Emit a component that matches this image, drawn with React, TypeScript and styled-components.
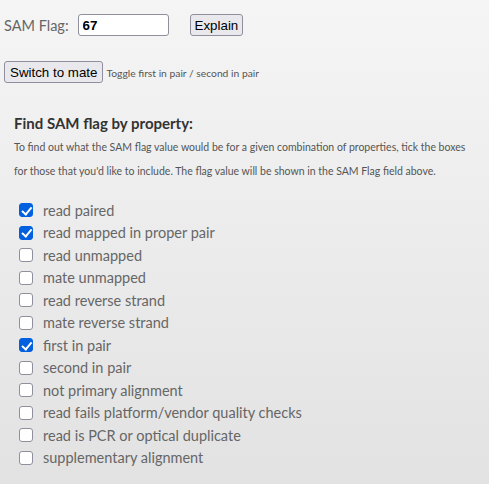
import React, { useState } from "react";
import styled, { createGlobalStyle } from "styled-components";

const Global = createGlobalStyle`
  html, body { margin: 0; padding: 0; }
  body {
    font-family: Lato, "Noto Sans", sans-serif;
    min-height: 484px;
    background: linear-gradient(to bottom, #f5f5f5 0%, #e2e2e2 100%);
  }
`;

const Page = styled.div`
  padding: 14px 0 0 4px;
  min-height: 470px;
  box-sizing: border-box;
`;

const TopRow = styled.div`
  display: flex;
  align-items: center;
  height: 22px;
`;

const FieldLabel = styled.label`
  font-size: 14.5px;
  color: #666;
  margin-right: 9px;
`;

const FlagInput = styled.input`
  box-sizing: border-box;
  width: 91px;
  height: 22px;
  border: 1px solid #8f8f9d;
  border-radius: 3px;
  background: #fff;
  padding: 1px 4px;
  font-family: "Liberation Sans", Arial, sans-serif;
  font-size: 13.33px;
  font-weight: bold;
  color: #000;
  margin-right: 21px;
  outline: none;
`;

const Button = styled.button<{ $pad: number }>`
  box-sizing: border-box;
  height: 22px;
  padding: 0 ${(p) => p.$pad}px;
  border: 1px solid #8f8f9d;
  border-radius: 3px;
  background: #e9e9ed;
  font-family: "Liberation Sans", Arial, sans-serif;
  font-size: 13.33px;
  color: #000;
  cursor: pointer;
`;

const SwitchRow = styled.div`
  display: flex;
  align-items: center;
  margin-top: 25px;
`;

const Hint = styled.span`
  font-size: 10.3px;
  color: #555;
  margin-left: 3px;
  padding-top: 1px;
`;

const Section = styled.section`
  padding: 0 14px 0 10px;
  margin-top: 30px;
`;

const Heading = styled.h3`
  margin: 0;
  font-size: 15px;
  font-weight: bold;
  color: #333;
  line-height: 20px;
`;

const Intro = styled.p`
  margin: 3px 0 0;
  font-size: 10.5px;
  line-height: 23.5px;
  color: #555;
`;

const List = styled.div`
  margin-top: 16px;
  display: flex;
  flex-direction: column;
`;

const Row = styled.label`
  display: flex;
  align-items: center;
  height: 22.5px;
  font-size: 14.5px;
  color: #666;
  cursor: pointer;
`;

const Box = styled.input`
  appearance: none;
  -webkit-appearance: none;
  box-sizing: border-box;
  width: 14px;
  height: 14px;
  margin: 0 10px 0 5px;
  border: 1px solid #8f8f9d;
  border-radius: 3px;
  background: #fff;
  position: relative;
  cursor: pointer;
  &:checked {
    background: #0060df;
    border-color: #0060df;
  }
  &:checked::after {
    content: "";
    position: absolute;
    left: 3.5px;
    top: 0.5px;
    width: 4px;
    height: 7.5px;
    border: solid #fff;
    border-width: 0 2.5px 2.5px 0;
    transform: rotate(40deg);
  }
`;

const properties = [
  "read paired",
  "read mapped in proper pair",
  "read unmapped",
  "mate unmapped",
  "read reverse strand",
  "mate reverse strand",
  "first in pair",
  "second in pair",
  "not primary alignment",
  "read fails platform/vendor quality checks",
  "read is PCR or optical duplicate",
  "supplementary alignment",
];

export default function App() {
  const [flag, setFlag] = useState(67);
  const toggle = (i: number) => setFlag((f) => f ^ (1 << i));
  const switchMate = () => setFlag((f) => f ^ (64 | 128));
  return (
    <>
      <Global />
      <Page>
        <TopRow>
          <FieldLabel htmlFor="samflag">SAM Flag:</FieldLabel>
          <FlagInput
            id="samflag"
            value={flag}
            onChange={(e) => setFlag(Number(e.target.value) || 0)}
          />
          <Button $pad={4}>Explain</Button>
        </TopRow>
        <SwitchRow>
          <Button $pad={5} onClick={switchMate}>Switch to mate</Button>
          <Hint>Toggle first in pair / second in pair</Hint>
        </SwitchRow>
        <Section>
          <Heading>Find SAM flag by property:</Heading>
          <Intro>
            To find out what the SAM flag value would be for a given combination of
            properties, tick the boxes for those that you'd like to include. The flag
            value will be shown in the SAM Flag field above.
          </Intro>
          <List>
            {properties.map((p, i) => (
              <Row key={p}>
                <Box
                  type="checkbox"
                  checked={(flag & (1 << i)) !== 0}
                  onChange={() => toggle(i)}
                />
                {p}
              </Row>
            ))}
          </List>
        </Section>
      </Page>
    </>
  );
}
